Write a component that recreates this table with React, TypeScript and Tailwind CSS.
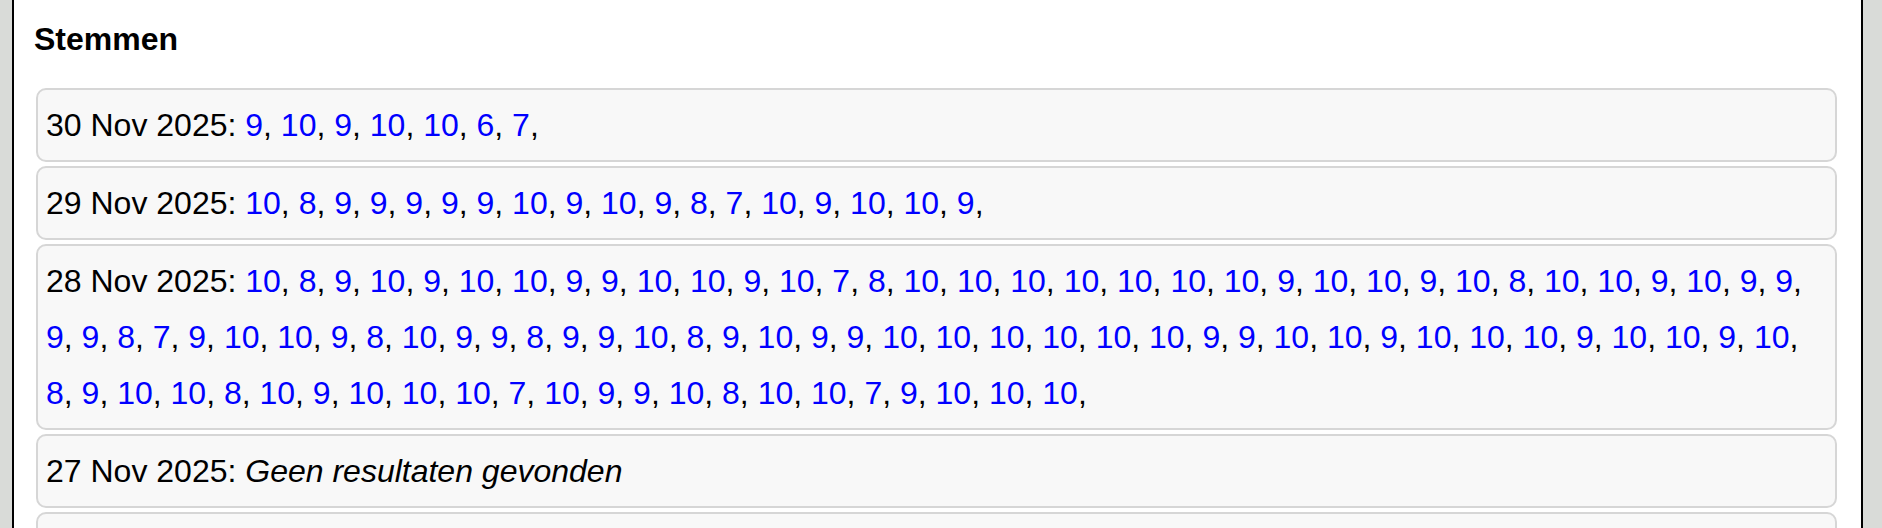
import React from "react";

type Row = { date: string; votes?: number[] };

const rows: Row[] = [
  { date: "30 Nov 2025", votes: [9, 10, 9, 10, 10, 6, 7] },
  {
    date: "29 Nov 2025",
    votes: [10, 8, 9, 9, 9, 9, 9, 10, 9, 10, 9, 8, 7, 10, 9, 10, 10, 9],
  },
  {
    date: "28 Nov 2025",
    votes: [
      10, 8, 9, 10, 9, 10, 10, 9, 9, 10, 10, 9, 10, 7, 8, 10, 10, 10, 10, 10, 10, 10, 9, 10, 10, 9, 10, 8, 10, 10, 9, 10, 9, 9,
      9, 9, 8, 7, 9, 10, 10, 9, 8, 10, 9, 9, 8, 9, 9, 10, 8, 9, 10, 9, 9, 10, 10, 10, 10, 10, 10, 9, 9, 10, 10, 9, 10, 10, 10, 9, 10, 10, 9,
      10, 8, 9, 10, 10, 8, 10, 9, 10, 10, 10, 7, 10, 9, 9, 10, 8, 10, 10, 7, 9, 10, 10, 10,
    ],
  },
  { date: "27 Nov 2025" },
  { date: "26 Nov 2025" },
];

export default function App() {
  return (
    <div
      className="flex min-h-screen bg-[#d9dbd8] pl-[12px] pr-[19px] text-black"
      style={{ fontFamily: '"Liberation Sans", Arial, Helvetica, sans-serif' }}
    >
      <div className="flex-1 border-x-2 border-black bg-white pl-[20px] pr-[22px] pt-[21px] pb-[20px]">
        <h4 className="text-[32px] font-bold leading-[37px] mb-[30px]">Stemmen</h4>
        <div className="flex flex-col gap-[4px]">
          {rows.map((r) => (
            <div
              key={r.date}
              className="mx-[2px] rounded-[10px] border-2 border-[#d6d6d6] bg-[#f8f8f8] px-[8px] py-[7px] text-[32px] leading-[56px]"
            >
              {r.date}:{" "}
              {r.votes ? (
                r.votes.map((v, i) => (
                  <React.Fragment key={i}>
                    <a className="text-[#0000ff]">{v}</a>,{" "}
                  </React.Fragment>
                ))
              ) : (
                <i>Geen resultaten gevonden</i>
              )}
            </div>
          ))}
        </div>
      </div>
    </div>
  );
}
